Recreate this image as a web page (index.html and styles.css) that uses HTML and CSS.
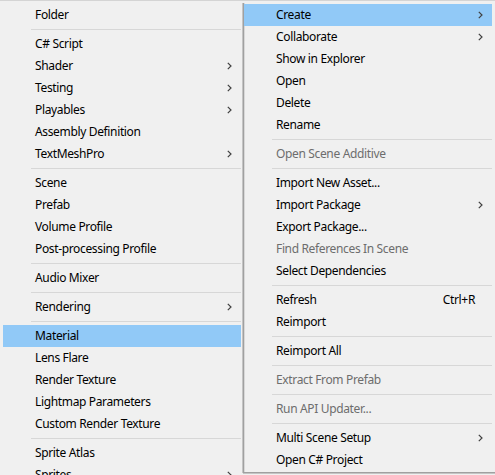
FILE: index.html
```html
<!DOCTYPE html>
<html>
<head>
<meta charset="utf-8">
<link rel="stylesheet" href="styles.css">
</head>
<body>
<div class="stage">
  <div class="menu menu-left">
    <div class="item"><span class="label">Folder</span></div>
    <div class="sep"></div>
    <div class="item"><span class="label">C# Script</span></div>
    <div class="item"><span class="label">Shader</span><span class="arrow"><svg width="5" height="8" viewBox="0 0 5 8"><path d="M0.8 0.8 L4 4 L0.8 7.2" fill="none" stroke="#404040" stroke-width="1.2"/></svg></span></div>
    <div class="item"><span class="label">Testing</span><span class="arrow"><svg width="5" height="8" viewBox="0 0 5 8"><path d="M0.8 0.8 L4 4 L0.8 7.2" fill="none" stroke="#404040" stroke-width="1.2"/></svg></span></div>
    <div class="item"><span class="label">Playables</span><span class="arrow"><svg width="5" height="8" viewBox="0 0 5 8"><path d="M0.8 0.8 L4 4 L0.8 7.2" fill="none" stroke="#404040" stroke-width="1.2"/></svg></span></div>
    <div class="item"><span class="label">Assembly Definition</span></div>
    <div class="item"><span class="label">TextMeshPro</span><span class="arrow"><svg width="5" height="8" viewBox="0 0 5 8"><path d="M0.8 0.8 L4 4 L0.8 7.2" fill="none" stroke="#404040" stroke-width="1.2"/></svg></span></div>
    <div class="sep"></div>
    <div class="item"><span class="label">Scene</span></div>
    <div class="item"><span class="label">Prefab</span></div>
    <div class="item"><span class="label">Volume Profile</span></div>
    <div class="item"><span class="label">Post-processing Profile</span></div>
    <div class="sep"></div>
    <div class="item"><span class="label">Audio Mixer</span></div>
    <div class="sep"></div>
    <div class="item"><span class="label">Rendering</span><span class="arrow"><svg width="5" height="8" viewBox="0 0 5 8"><path d="M0.8 0.8 L4 4 L0.8 7.2" fill="none" stroke="#404040" stroke-width="1.2"/></svg></span></div>
    <div class="sep"></div>
    <div class="item active"><span class="label">Material</span></div>
    <div class="item"><span class="label">Lens Flare</span></div>
    <div class="item"><span class="label">Render Texture</span></div>
    <div class="item"><span class="label">Lightmap Parameters</span></div>
    <div class="item"><span class="label">Custom Render Texture</span></div>
    <div class="sep"></div>
    <div class="item"><span class="label">Sprite Atlas</span></div>
    <div class="item"><span class="label">Sprites</span><span class="arrow"><svg width="5" height="8" viewBox="0 0 5 8"><path d="M0.8 0.8 L4 4 L0.8 7.2" fill="none" stroke="#404040" stroke-width="1.2"/></svg></span></div>
  </div>
  <div class="menu menu-right">
    <div class="item active"><span class="label">Create</span><span class="arrow"><svg width="5" height="8" viewBox="0 0 5 8"><path d="M0.8 0.8 L4 4 L0.8 7.2" fill="none" stroke="#404040" stroke-width="1.2"/></svg></span></div>
    <div class="item"><span class="label">Collaborate</span><span class="arrow"><svg width="5" height="8" viewBox="0 0 5 8"><path d="M0.8 0.8 L4 4 L0.8 7.2" fill="none" stroke="#404040" stroke-width="1.2"/></svg></span></div>
    <div class="item"><span class="label">Show in Explorer</span></div>
    <div class="item"><span class="label">Open</span></div>
    <div class="item"><span class="label">Delete</span></div>
    <div class="item"><span class="label">Rename</span></div>
    <div class="sep"></div>
    <div class="item disabled"><span class="label">Open Scene Additive</span></div>
    <div class="sep"></div>
    <div class="item"><span class="label">Import New Asset...</span></div>
    <div class="item"><span class="label">Import Package</span><span class="arrow"><svg width="5" height="8" viewBox="0 0 5 8"><path d="M0.8 0.8 L4 4 L0.8 7.2" fill="none" stroke="#404040" stroke-width="1.2"/></svg></span></div>
    <div class="item"><span class="label">Export Package...</span></div>
    <div class="item disabled"><span class="label">Find References In Scene</span></div>
    <div class="item"><span class="label">Select Dependencies</span></div>
    <div class="sep"></div>
    <div class="item"><span class="label">Refresh</span><span class="shortcut">Ctrl+R</span></div>
    <div class="item"><span class="label">Reimport</span></div>
    <div class="sep"></div>
    <div class="item"><span class="label">Reimport All</span></div>
    <div class="sep"></div>
    <div class="item disabled"><span class="label">Extract From Prefab</span></div>
    <div class="sep"></div>
    <div class="item disabled"><span class="label">Run API Updater...</span></div>
    <div class="sep"></div>
    <div class="item"><span class="label">Multi Scene Setup</span><span class="arrow"><svg width="5" height="8" viewBox="0 0 5 8"><path d="M0.8 0.8 L4 4 L0.8 7.2" fill="none" stroke="#404040" stroke-width="1.2"/></svg></span></div>
    <div class="item"><span class="label">Open C# Project</span></div>
  </div>
</div>
</body>
</html>
```
FILE: styles.css
```css
html, body {
  margin: 0;
  padding: 0;
  background: #f0f0f0;
  overflow: hidden;
}
body {
  width: 495px;
  height: 475px;
  font-family: "Noto Sans", "Open Sans", sans-serif;
  font-size: 12px;
  letter-spacing: -0.35px;
  color: #000;
}
.stage {
  display: flex;
  align-items: flex-start;
  height: 475px;
  border-top: 1px solid #d4d4d4;
  box-sizing: border-box;
}
.menu {
  background: #f0f0f0;
  display: flex;
  flex-direction: column;
  box-sizing: border-box;
}
.menu-left {
  width: 243px;
  padding: 3px 2px 0 3px;
  flex: none;
}
.menu-right {
  flex: 1;
  margin-top: 2px;
  padding: 1px 3px 1px 0;
  border-left: 1px solid #a0a0a0;
  border-bottom: 1px solid #a0a0a0;
  box-shadow: -1px 0 0 #c4c4c4, 0 1px 0 #c4c4c4, inset 1px 0 0 #d8d8d8;
}
.item {
  height: 22px;
  box-sizing: border-box;
  display: flex;
  align-items: center;
  padding: 0 9px 0 32px;
  white-space: nowrap;
  line-height: 22px;
}
.item .label {
  flex: 1;
}
.item.active {
  background: #91c9f7;
}
.item.disabled {
  color: #6d6d6d;
}
.arrow {
  display: flex;
  align-items: center;
  width: 5px;
  height: 8px;
}
.shortcut {
  margin-right: 8px;
}
.sep {
  height: 7px;
  display: flex;
  align-items: center;
  padding-left: 28px;
}
.sep::before {
  content: "";
  display: block;
  flex: 1;
  height: 1px;
  background: #d7d7d7;
}
```
